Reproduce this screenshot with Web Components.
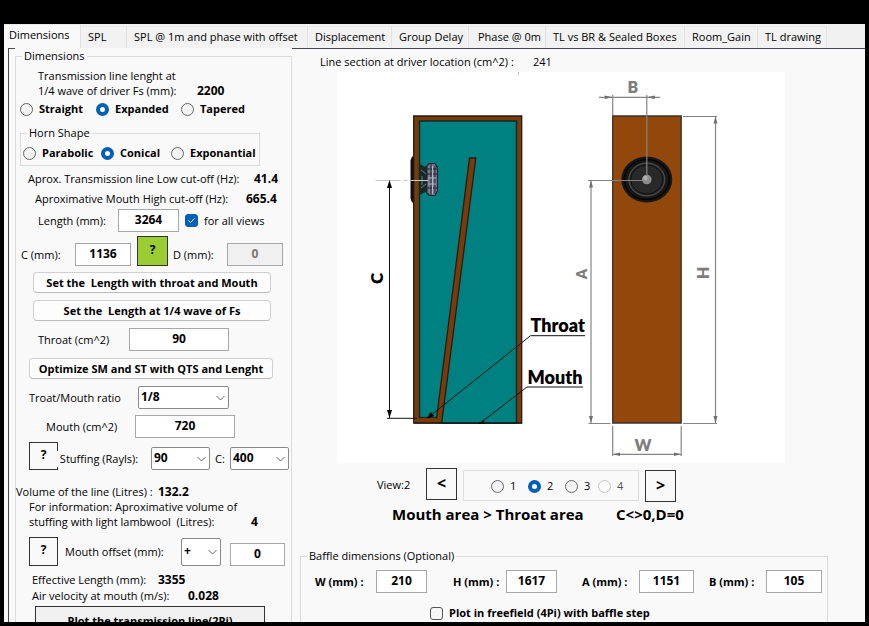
<!DOCTYPE html>
<html lang="en">
<head>
<meta charset="utf-8">
<title>Transmission line design</title>
<style>
html,body{height:100%}
body{margin:0;background:#000;color:#000;font:11px/16px "Open Sans","Noto Sans",sans-serif}
</style>
</head>
<body>
<tl-app></tl-app>
<script>
const base = `*{box-sizing:border-box}
button,input,select{font:inherit;color:inherit;margin:0;border-radius:0}
label,span,output,b{white-space:pre}
b,output,.b{font-weight:700}
output,input,select{font-size:12px}
`;
const define = (name, render, setup) => customElements.define(name, class extends HTMLElement {
  connectedCallback() {
    if (this.shadowRoot) return;
    this.attachShadow({mode: 'open'}).innerHTML = render(this);
    if (setup) setup(this, this.shadowRoot);
  }
});
const at = (el, name, fallback = '') => el.getAttribute(name) ?? fallback;

/* One horizontal line of controls; --cols gives the tracks, --t the space above, --h the height */
define('form-row', () => `<style>
:host{display:grid;grid-template-columns:var(--cols,1fr);margin-top:var(--t,0);padding-left:var(--l,0);height:var(--h,auto);align-items:var(--align,center);white-space:pre}
</style><slot></slot>`);

define('group-box', el => `<style>${base}
:host{display:block}
fieldset{margin:0;padding:0;border:1px solid #dcdcdc;min-width:0;height:100%}
legend{height:16px;margin-left:6px;padding:0 2px;line-height:16px}
</style><fieldset><legend>${at(el, 'legend')}</legend><slot></slot></fieldset>`);

define('text-field', el => `<style>${base}
:host{display:grid;grid-template-columns:var(--label) var(--box)}
label{line-height:23px}
input{width:100%;height:23px;border:1px solid #a6a6ab;background:#fff;text-align:center;font-weight:700;padding:0 0 2px}
input:disabled{background:#f0f0f0;color:#777}
</style><label for="f" class="${el.hasAttribute('strong') ? 'b' : ''}">${at(el, 'label')}</label><input id="f" value="${at(el, 'value')}" ${el.hasAttribute('disabled') ? 'disabled' : ''}>`);

define('drop-down', el => `<style>${base}
:host{display:grid;grid-template-columns:var(--label,0) var(--box)}
label{align-self:center;background:#f9f9f9;position:relative;justify-self:start}
div{display:grid}
select,svg{grid-area:1/1}
select{appearance:none;width:100%;height:var(--sh,23px);border:1px solid #8a8a8a;border-radius:2px;background:#fff;font-weight:700;padding:0 0 2px 2px}
svg{justify-self:end;align-self:center;margin-right:4px;pointer-events:none}
</style><label for="s">${at(el, 'label')}</label><div><select id="s" aria-label="${at(el, 'name', at(el, 'label'))}"><option>${at(el, 'value')}</option></select>
<svg width="9" height="6" viewBox="0 0 9 6" fill="none" stroke="#666"><path d="M.5 1l4 4 4-4"/></svg></div>`);

define('radio-set', el => {
  const items = at(el, 'items').split('|');
  const off = at(el, 'off');
  return `<style>${base}
:host{display:grid;grid-template-columns:var(--cols);align-items:center;height:var(--h);padding-left:var(--l,0)}
label{display:flex;align-items:center;gap:6px;font-weight:var(--w,700)}
input{appearance:none;width:13px;height:13px;border:1px solid #666;border-radius:50%;background:#f3f3f3;flex:none}
input:checked{border:4px solid #005fb8;background:#fff}
input:disabled{border-color:#c4c4c4;background:#fbfbfb}
input:disabled+span{color:#555}
</style>${items.map(i => `<label><input type="radio" name="r" ${i === at(el, 'value') ? 'checked' : ''} ${i === off ? 'disabled' : ''}><span>${i}</span></label>`).join('')}`;
});

define('check-box', el => `<style>${base}
:host{display:block}
label{display:flex;align-items:center;gap:6px;font-weight:var(--w,400)}
div{display:grid}
input,svg{grid-area:1/1}
input{appearance:none;width:13px;height:13px;border:1px solid #555;border-radius:3px;background:#f6f6f6}
input:checked{background:#005fb8;border-color:#005fb8}
svg{display:none;pointer-events:none}
input:checked+svg{display:block}
</style><label><div><input type="checkbox" ${el.hasAttribute('checked') ? 'checked' : ''}><svg width="13" height="13" fill="none" stroke="#fff"><path d="M3.5 6.5l2 2 4-4"/></svg></div><span>${at(el, 'label')}</span></label>`);

define('push-button', () => `<style>${base}
:host{display:block}
button{display:block;width:100%;height:var(--bh,21px);padding:0;font-weight:700;line-height:16px;white-space:pre;text-align:center;background:#fdfdfd;border:1px solid #d0d0d0;border-bottom-color:#bbb;border-radius:4px}
:host([square]) button{border:1px solid #333;border-radius:0;background:var(--bg,#f9f9f9);padding-bottom:3px;font-size:var(--fs,12px)}
</style><button><slot></slot></button>`);

define('tab-strip', el => `<style>${base}
:host{display:grid;grid-template-columns:77px 46px 181px 84px 77px 77px 139px 73px 69px;height:24px;background:#f0f0f0;align-items:end}
button{height:22px;border:0;border-right:1px solid #e2e2e2;border-top:1px solid #e9e9e9;background:#f2f2f2;padding:0 0 1px 7px;text-align:left;white-space:pre}
button[aria-selected=true]{height:24px;background:#f9f9f9;padding:0 0 3px 8px}
button:nth-child(7){padding-left:9px}
button:nth-child(2){padding-left:5px}
</style>${at(el, 'items').split('|').map((t, i) => `<button role="tab" aria-selected="${!i}">${t}</button>`).join('')}`,
el => el.setAttribute('role', 'tablist'));

define('box-drawing', () => `<style>
:host{display:block;background:#fff}
svg{display:block;width:100%;height:auto}
text{font-family:Lato,"Open Sans",sans-serif;font-weight:800}
.g{stroke:#858585;stroke-width:1.2;fill:none}
.ga{fill:#6f6f6f}
.k{stroke:#111;stroke-width:1;fill:none}
</style>
<svg viewBox="337 72 448 391" role="img" aria-label="Side section and front view of the box">
<path fill="#bbb" d="M518 72h1v3h-1z"/>
<path fill="#783c0a" stroke="#2a1a10" stroke-width="1.3" d="M413.700 116h108v307h-108z"/>
<path fill="#008080" stroke="#102a2a" stroke-width="1.500" d="M419.500 121h97v302h-75l-4-5.500h-18z"/>
<path fill="#783c0a" d="M414.400 418.200h26.500v4.200h-26.500z"/>
<path fill="#783c0a" stroke="#2a1a10" stroke-width="1.300" d="M469.500 158h6.300L441.700 422.500h-3.500l-1.500-5z"/>
<path fill="#783c0a" d="M420 418.300h20.500v4h-20.500z"/>
<path class="k" d="M414 423h108"/>
<g>
<path fill="#111" d="M413.500 156.500h-1.500l-1.500 4v38l1.500 4h1.500z"/>
<path fill="#142b2c" d="M420 164l5 3 4-4h6l3 4v24l-3 5h-6l-4-4-5 3z"/>
<path fill="#77778c" stroke="#222331" d="M427 166l3-2.500h5l2.500 5v22l-2.500 5h-5l-3-3z"/>
<path stroke="#242535" fill="none" d="M427 169h10M425 174h13M425 188h13M431 164v31M435 166v28"/>
<path stroke="#b4b4c6" fill="none" d="M432.500 166v28M428 178h8M428 184h8"/>
<path stroke="#6e7c85" fill="none" d="M421 170l5 4M421 188l5-4M422 176v9"/>
<path stroke="#c8c8c8" stroke-dasharray="25 3 4 3" d="M375.500 180.500h53"/>
</g>
<path class="k" stroke-width="1.300" d="M389.500 182v236M387 418.300h30"/>
<path d="M389.500 180l2.500 8h-5zM389.500 418l2.500-8h-5z"/>
<text transform="translate(382.500 284) rotate(-90)" font-size="17">C</text>
<path class="k" d="M585 335.700h-54.500L430 416M583 387h-56L481 422.500"/>
<path d="M427 418.500l3.500-6.500 3.500 4zM478.500 423.500l5-3.500 1 3.500z"/>
<text x="530.500" y="332" font-size="18">Throat</text>
<text x="527.500" y="384" font-size="18">Mouth</text>
<path fill="#91480a" stroke="#3b3028" stroke-width="1.300" d="M612.700 116h68.500v307h-68.500z"/>
<ellipse cx="646.800" cy="179.500" rx="25.500" ry="23" fill="#171717"/>
<ellipse cx="646.800" cy="179.500" rx="22.500" ry="20" fill="none" stroke="#050505" stroke-width="1.500"/>
<ellipse cx="646.800" cy="179.500" rx="18" ry="16.500" fill="#292929" stroke="#555" stroke-width="1"/>
<ellipse cx="646.800" cy="179.500" rx="16" ry="14.500" fill="none" stroke="#101010"/>
<path class="g" d="M646.800 95v84M588 180.500h59M599 97.300h61M612.700 95v20M591 181v242M588.500 423.500h22M683 116.500h34M683 423.500h34M715.500 117v306M612.700 426v30M681.200 426v30M613 454.300h68"/>
<circle cx="646.800" cy="179.500" r="4.800" fill="#8d8d8d"/><circle cx="645.500" cy="178" r="2.200" fill="#b0b0b0"/>
<path class="ga" d="M591 180.500l2 7h-4zM591 423l2-7h-4zM715.500 116.500l2 7h-4zM715.500 423l2-7h-4zM612.700 97.300l-8-1.700v3.400zM646.800 97.300l8-1.700v3.400zM613 454.300l7-1.700v3.400zM681 454.300l-7-1.700v3.400z"/>
<g fill="#7d7d7d" font-size="16">
<text x="627.500" y="93">B</text>
<text x="634.500" y="450.500">W</text>
<text transform="translate(587 279) rotate(-90)" font-size="14">A</text>
<text transform="translate(709 279) rotate(-90)">H</text>
</g>
</svg>`);

define('line-form', () => `<style>${base}
:host{display:block}
push-button{align-self:end}
</style>
<group-box legend="Dimensions">
<form-row style="--t:4px;--l:22px;line-height:15px;--cols:159px 1fr;--align:end"><span>Transmission line lenght at
1/4 wave of driver Fs (mm):</span><output>2200</output></form-row>
<radio-set items="Straight|Expanded|Tapered" value="Expanded" style="--h:22px;--l:4px;--cols:76px 85px 1fr"></radio-set>
<group-box legend="Horn Shape" style="margin:5px 31px 0 4px"><radio-set items="Parabolic|Conical|Exponantial" value="Conical" style="--h:24px;--l:2px;--cols:78px 70px 1fr"></radio-set></group-box>
<form-row style="--t:3px;--h:20px;--l:12px;--cols:226px 1fr"><span>Aprox. Transmission line Low cut-off (Hz):</span><output>41.4</output></form-row>
<form-row style="--h:20px;--l:19px;--cols:211px 1fr"><span>Aproximative Mouth High cut-off (Hz):</span><output>665.4</output></form-row>
<form-row style="--h:23px;--l:22px;--cols:147px 1fr"><text-field label="Length (mm):" value="3264" style="--label:80px;--box:61px"></text-field><check-box checked label="for all views"></check-box></form-row>
<form-row style="--t:4px;--h:30px;--l:5px;--align:end;--cols:116px 36px 1fr"><text-field label="C (mm):" value="1136" style="--label:54px;--box:56px"></text-field><push-button square style="--bh:30px;--bg:#9acd32;width:31px">?</push-button><text-field label="D (mm):" value="0" disabled style="--label:54px;--box:56px"></text-field></form-row>
<form-row style="--t:6px;--l:17px;--cols:238px"><push-button>Set the  Length with throat and Mouth</push-button></form-row>
<form-row style="--t:7px;--l:17px;--cols:238px"><push-button>Set the  Length at 1/4 wave of Fs</push-button></form-row>
<form-row style="--t:7px;--l:22px"><text-field label="Throat (cm^2)" value="90" style="--label:91px;--box:100px"></text-field></form-row>
<form-row style="--t:7px;--l:13px;--cols:244px"><push-button>Optimize SM and ST with QTS and Lenght</push-button></form-row>
<form-row style="--t:7px;--l:13px"><drop-down label="Troat/Mouth ratio" value="1/8" style="--label:109px;--box:91px"></drop-down></form-row>
<form-row style="--t:6px;--l:30px"><text-field label="Mouth (cm^2)" value="720" style="--label:89px;--box:100px"></text-field></form-row>
<form-row style="--t:4px;--h:28px;--l:13px;--align:end;--cols:28px 158px 1fr"><push-button square style="--bh:28px;width:29px">?</push-button><drop-down label=" Stuffing (Rayls):" value="90" style="--label:94px;--box:59px"></drop-down><drop-down label="C:" value="400" style="--label:15px;--box:59px"></drop-down></form-row>
<form-row style="--t:14px;line-height:15px;--cols:142px 1fr"><span>Volume of the line (Litres) :</span><output>132.2</output></form-row>
<form-row style="--l:13px;line-height:15px;--align:end;--cols:222px 1fr"><span>For information: Aproximative volume of
stuffing with light lambwool  (Litres):</span><output>4</output></form-row>
<form-row style="--t:8px;--h:29px;--l:13px;--align:end;--cols:36px 165px 1fr"><push-button square style="--bh:29px;width:29px">?</push-button><drop-down label="Mouth offset (mm):" value="+" style="--label:116px;--box:40px;--sh:28px"></drop-down><text-field label="" value="0" style="--label:0px;--box:55px"></text-field></form-row>
<form-row style="--t:6px;--l:16px;--cols:126px 1fr"><span>Effective Length (mm):</span><output>3355</output></form-row>
<form-row style="--l:16px;--cols:156px 1fr"><span>Air velocity at mouth (m/s):</span><output>0.028</output></form-row>
<form-row style="--t:2px;--l:19px;--cols:230px"><push-button square style="--bh:32px;--bg:#f0f0f0;--fs:11px">Plot the transmission line(2Pi)</push-button></form-row>
</group-box>`);

define('view-pane', () => `<style>${base}
:host{display:block}
.view{width:176px;height:31px;border:1px solid #dcdcdc}
</style>
<form-row style="--t:5px;--l:28px;--cols:213px 1fr"><span>Line section at driver location (cm^2) :</span><span>241</span></form-row>
<box-drawing style="width:448px;margin:2px 0 0 45px"></box-drawing>
<form-row style="--t:5px;--h:34px;--l:85px;--cols:49px 37px 182px 1fr"><span>View:2</span><push-button square style="--bh:32px;--fs:16px;width:31px;align-self:start">&lt;</push-button><div class="view"><radio-set items="1|2|3|4" value="2" off="4" style="--h:31px;--l:27px;--w:400;--cols:37px 37px 33px 1fr"></radio-set></div><push-button square style="--bh:32px;--fs:16px;width:31px;align-self:end">&gt;</push-button></form-row>
<form-row style="--t:2px;--h:20px;--l:100px;--cols:224px 1fr;font-size:15px"><b>Mouth area &gt; Throat area</b><b>C&lt;&gt;0,D=0</b></form-row>
<group-box legend="Baffle dimensions (Optional)" style="margin:24px 37px 0 8px;height:90px">
<form-row style="--t:6px;--l:14px;--cols:138px 129px 127px 1fr"><text-field strong label="W (mm) :" value="210" style="--label:61px;--box:51px"></text-field><text-field strong label="H (mm) :" value="1617" style="--label:53px;--box:51px"></text-field><text-field strong label="A (mm) :" value="1151" style="--label:57px;--box:55px"></text-field><text-field strong label="B (mm) :" value="105" style="--label:57px;--box:56px"></text-field></form-row>
<form-row style="--t:12px;--l:129px"><check-box label="Plot in freefield (4Pi) with baffle step" style="--w:700"></check-box></form-row>
</group-box>`);

define('tl-app', () => `<style>${base}
:host{display:flex;flex-direction:column;box-sizing:border-box;height:100vh;border:4px solid #000;border-top-width:24px;overflow:hidden;background:#f9f9f9}
main{flex:1;min-height:0;display:grid;grid-template-columns:7px 276px 1fr;margin-left:4px;border:solid #4d4850;border-width:1px 0 0 1px;overflow:visible}
line-form{grid-column:2;margin-top:-1px;margin-left:-1px;background:#f9f9f9}
tab-strip{flex:none}
</style>
<tab-strip items="Dimensions|SPL|SPL @ 1m and phase with offset|Displacement|Group Delay|Phase @ 0m|TL vs BR &amp; Sealed Boxes|Room_Gain|TL drawing"></tab-strip>
<main><line-form></line-form><view-pane></view-pane></main>`);
</script>
</body>
</html>
